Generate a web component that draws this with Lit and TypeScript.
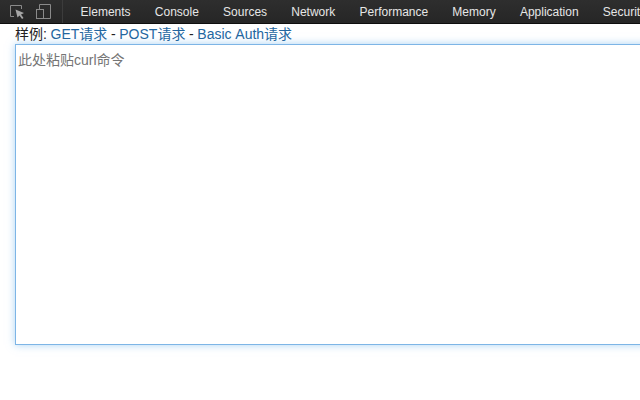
import { LitElement, html, css } from "lit";
import { customElement } from "lit/decorators.js";

@customElement("app-root")
export class AppRoot extends LitElement {
  static styles = css`
    :host {
      display: block;
      width: 640px;
      height: 400px;
      overflow: hidden;
      background: #fff;
      font-family: "Liberation Sans", "Noto Sans CJK SC", sans-serif;
    }
    .bar {
      display: flex;
      align-items: center;
      height: 23px;
      background: linear-gradient(#2e2e2e, #262626);
      border-bottom: 1px solid #0e0e0e;
      overflow: hidden;
    }
    .icons {
      display: flex;
      align-items: center;
      gap: 10px;
      padding-left: 9px;
      width: 63px;
      height: 23px;
      box-sizing: border-box;
      flex: none;
      border-right: 1px solid #3c3c3c;
    }
    .icons svg { display: block; flex: none; }
    .tabs {
      display: flex;
      gap: 24.2px;
      padding-left: 17.6px;
      color: #e6e6e6;
      font-size: 12px;
      white-space: nowrap;
    }
    .sample {
      height: 20px;
      padding-left: 15px;
      font-size: 14px;
      line-height: 20px;
      word-spacing: -0.25px;
      color: #222;
      white-space: nowrap;
    }
    .sample a { color: #23669f; text-decoration: none; word-spacing: 0.6px; }
    .box {
      margin-left: 15px;
      width: 700px;
      height: 301px;
      box-sizing: border-box;
      border: 1px solid #7db5e6;
      box-shadow: 0 0 8px rgba(102, 175, 233, 0.55);
      padding: 6px 2px;
      font-size: 14px;
      line-height: 18px;
      color: #757575;
      background: #fff;
    }
  `;

  render() {
    const tabs = ["Elements", "Console", "Sources", "Network", "Performance", "Memory", "Application", "Security"];
    return html`
      <div class="bar">
        <div class="icons">
          <svg width="16" height="16" viewBox="0 0 16 16" fill="none">
            <path d="M5 12.5H1.5V1.5H12.5V5" stroke="#8a8a8a" stroke-width="1"/>
            <path d="M6.5 5.5L15 9L12 10.5L14.5 14L13 15L10.5 11.5L8.5 13.5Z" fill="#a6a6a6"/>
          </svg>
          <svg width="16" height="16" viewBox="0 0 16 16" fill="none" stroke="#8a8a8a" stroke-width="1">
            <path d="M4.5 5.5V0.5H15.5V14.5H8.5"/>
            <rect x="1.5" y="5.5" width="7" height="9"/>
          </svg>
        </div>
        <div class="tabs">${tabs.map((t) => html`<span>${t}</span>`)}</div>
      </div>
      <div class="sample">样例: <a>GET请求</a> - <a>POST请求</a> - <a>Basic Auth请求</a></div>
      <div class="box">此处粘贴curl命令</div>
    `;
  }
}
